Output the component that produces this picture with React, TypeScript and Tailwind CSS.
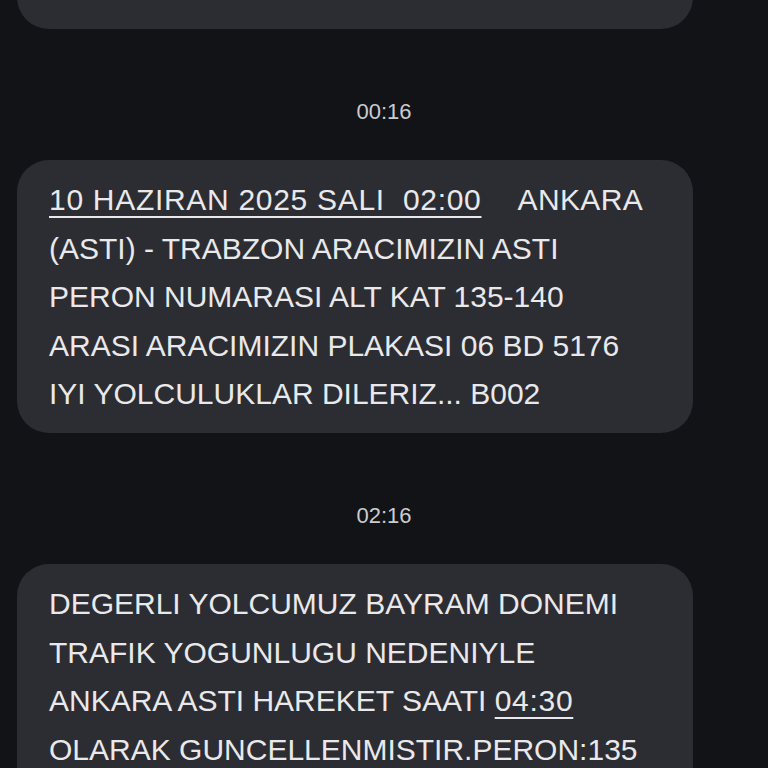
const FONT = { fontFamily: '"Liberation Sans", Arial, sans-serif' };

type Line = { pre?: string; link?: string; post?: string };

const MESSAGES: { time?: string; lines: Line[]; cut?: boolean }[] = [
  {
    cut: true,
    lines: [{ pre: 'SEFER NO 1502 BILET NO 0202' }],
  },
  {
    time: '00:16',
    lines: [
      { link: '10 HAZIRAN 2025 SALI  02:00', post: 'ANKARA' },
      { pre: '(ASTI) - TRABZON ARACIMIZIN ASTI' },
      { pre: 'PERON NUMARASI ALT KAT 135-140' },
      { pre: 'ARASI ARACIMIZIN PLAKASI 06 BD 5176' },
      { pre: 'IYI YOLCULUKLAR DILERIZ... B002' },
    ],
  },
  {
    time: '02:16',
    lines: [
      { pre: 'DEGERLI YOLCUMUZ BAYRAM DONEMI' },
      { pre: 'TRAFIK YOGUNLUGU NEDENIYLE' },
      { pre: 'ANKARA ASTI HAREKET SAATI ', link: '04:30' },
      { pre: 'OLARAK GUNCELLENMISTIR.PERON:135' },
      { pre: 'IYI YOLCULUKLAR DILERIZ... B002' },
    ],
  },
];

function Bubble({ lines, cut }: { lines: Line[]; cut?: boolean }) {
  return (
    <div
      className={`ml-[17px] w-[676px] rounded-[32px] bg-[#2c2d32] pl-8 pr-6 pt-4 pb-[15px] text-[30px] leading-[48.4px] text-[#e9e9ec] ${
        cut ? '-mt-[50px]' : ''
      }`}
    >
      {lines.map((l, i) => (
        <div key={i} className="whitespace-pre">
          {l.pre}
          {l.link && (
            <span className="underline decoration-2 underline-offset-[6px] tracking-[0.7px]">{l.link}</span>
          )}
          {l.post && <span className="ml-9 tracking-[0.4px]">{l.post}</span>}
        </div>
      ))}
    </div>
  );
}

export default function App() {
  return (
    <div className="h-[768px] w-[768px] overflow-hidden bg-[#121317]" style={FONT}>
      {MESSAGES.map((m, i) => (
        <div key={i}>
          {m.time && (
            <div className="mt-[71px] mb-[36px] text-center text-[22px] leading-6 text-[#cbccd0]">
              {m.time}
            </div>
          )}
          <Bubble lines={m.lines} cut={m.cut} />
        </div>
      ))}
    </div>
  );
}
